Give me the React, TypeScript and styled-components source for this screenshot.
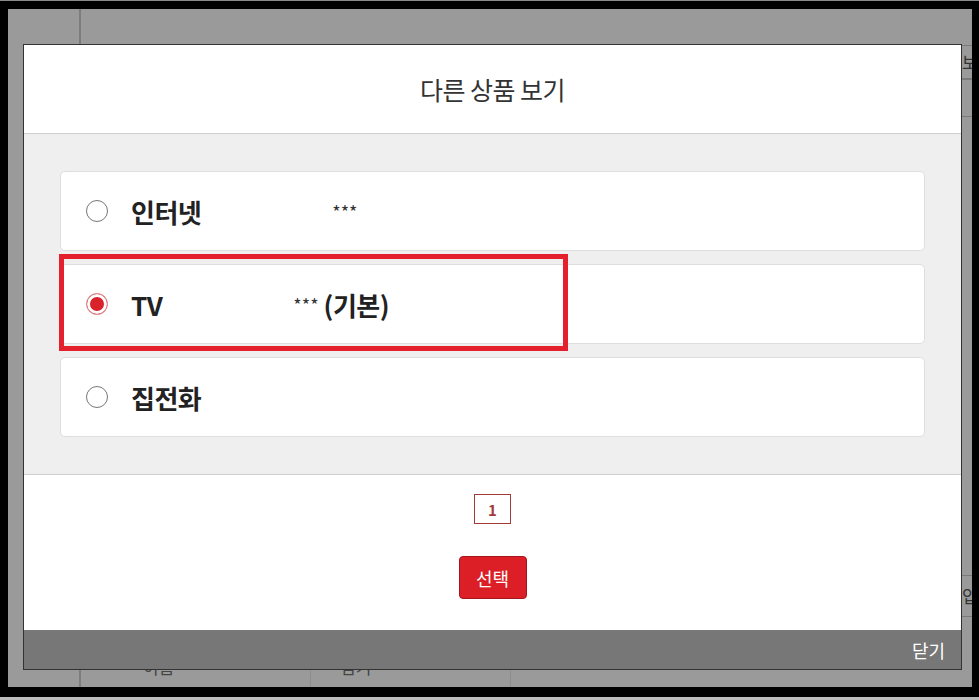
import React, { useState } from 'react'
import styled, { createGlobalStyle } from 'styled-components'

const GlobalStyle = createGlobalStyle`
  html, body {
    margin: 0;
    padding: 0;
    background: #000;
  }
  body {
    font-family: "Noto Sans CJK KR", "Noto Sans", sans-serif;
  }
`

type Product = {
  id: string
  name: string
  detail?: string
  note?: string
}

const products: Product[] = [
  { id: 'internet', name: '인터넷', detail: '***' },
  { id: 'tv', name: 'TV', detail: '***', note: '(기본)' },
  { id: 'phone', name: '집전화' },
]

const App: React.FC = () => {
  const [selected, setSelected] = useState('tv')

  return (
    <>
      <GlobalStyle />
      <Screen>
        <Page>
          <PageTop>
            <SideCell />
            <TopCell />
          </PageTop>
          <PageMiddle>
            <SideCell />
            <MiddleCell>
              <EdgeRow $top={0} $height={34}>
                <EdgeLabel>보</EdgeLabel>
              </EdgeRow>
              <EdgeRow $top={34} $height={38} />
              <EdgeRow $top={530} $height={42}>
                <EdgeLabel>입</EdgeLabel>
              </EdgeRow>
            </MiddleCell>
          </PageMiddle>
          <PageBottom>
            <SideCell />
            <BottomCell $width={230} $pad={62}>이름</BottomCell>
            <BottomCell $width={200} $pad={29}>검기</BottomCell>
          </PageBottom>

          <Modal>
            <ModalHeader>다른 상품 보기</ModalHeader>

            <ModalBody>
              {products.map(p => (
                <OptionCard key={p.id} onClick={() => setSelected(p.id)}>
                  <Radio $checked={selected === p.id} />
                  <OptionName>{p.name}</OptionName>
                  {p.detail && (
                    <OptionDetail>
                      {p.detail}
                      {p.note && <OptionNote>{p.note}</OptionNote>}
                    </OptionDetail>
                  )}
                  {p.id === 'tv' && <Highlight />}
                </OptionCard>
              ))}
            </ModalBody>

            <ModalFooter>
              <Pager>
                <PageNum>1</PageNum>
              </Pager>
              <SelectButton>선택</SelectButton>
            </ModalFooter>

            <CloseBar>
              <CloseText>닫기</CloseText>
            </CloseBar>
          </Modal>
        </Page>
      </Screen>
    </>
  )
}

const Screen = styled.div`
  width: 979px;
  height: 700px;
  box-sizing: border-box;
  background: #000;
  padding: 8px 7px 10px 8px;
  border-top: 1px solid #8a8a8a;
  border-bottom: 3px solid #bdbdbd;
`

const Page = styled.div`
  position: relative;
  width: 100%;
  height: 100%;
  background: #9a9a9a;
  display: flex;
  flex-direction: column;
  overflow: hidden;
`

const PageTop = styled.div`
  display: flex;
  height: 36px;
`

const PageMiddle = styled.div`
  display: flex;
  flex: 1;
`

const PageBottom = styled.div`
  display: flex;
  height: 30px;
`

const SideCell = styled.div`
  width: 71px;
  border-right: 2px solid #7c7c7c;
`

const TopCell = styled.div`
  flex: 1;
`

const MiddleCell = styled.div`
  position: relative;
  flex: 1;
`

const EdgeRow = styled.div<{ $top: number; $height: number }>`
  position: absolute;
  right: 0;
  top: ${props => props.$top}px;
  width: 84px;
  height: ${props => props.$height}px;
  box-sizing: border-box;
  border-top: 1px solid #7a7a7a;
  border-bottom: 1px solid #7a7a7a;
  display: flex;
  justify-content: flex-end;
  align-items: center;
`

const EdgeLabel = styled.span`
  width: 10px;
  overflow: hidden;
  white-space: nowrap;
  font-size: 17px;
  line-height: 20px;
  color: #333;
`

const BottomCell = styled.div<{ $width: number; $pad: number }>`
  width: ${props => props.$width}px;
  padding-left: ${props => props.$pad}px;
  font-size: 17px;
  color: #444;
  line-height: 20px;
  border-right: 1px solid #8c8c8c;
  box-sizing: border-box;
`

const Modal = styled.div`
  position: absolute;
  left: 15px;
  top: 35px;
  width: 939px;
  height: 626px;
  box-sizing: border-box;
  border: 1px solid #333;
  background: #fff;
  display: flex;
  flex-direction: column;
`

const ModalHeader = styled.div`
  height: 88px;
  display: flex;
  align-items: center;
  justify-content: center;
  font-size: 25px;
  color: #333;
  letter-spacing: -0.5px;
  border-bottom: 1px solid #cfcfcf;
`

const ModalBody = styled.div`
  background: #efefef;
  padding: 37px 36px 37px 36px;
  display: flex;
  flex-direction: column;
  gap: 13px;
  border-bottom: 1px solid #cfcfcf;
`

const OptionCard = styled.div`
  position: relative;
  height: 80px;
  box-sizing: border-box;
  background: #fff;
  border: 1px solid #dedede;
  border-radius: 5px;
  display: flex;
  align-items: center;
  padding-left: 25px;
  cursor: pointer;
`

const Radio = styled.span<{ $checked: boolean }>`
  width: 22px;
  height: 22px;
  box-sizing: border-box;
  border-radius: 50%;
  flex-shrink: 0;
  border: 1.5px solid ${props => (props.$checked ? '#e08a8a' : '#777')};
  background: ${props => (props.$checked ? '#d9232a' : '#fff')};
  box-shadow: ${props => (props.$checked ? 'inset 0 0 0 3px #fff' : 'none')};
`

const OptionName = styled.span`
  margin-left: 23px;
  font-size: 26px;
  font-weight: 700;
  color: #222;
  letter-spacing: -0.5px;
`

const OptionDetail = styled.span`
  margin-left: 131px;
  font-size: 18px;
  color: #333;
  display: flex;
  align-items: center;
`

const OptionNote = styled.span`
  margin-left: 5px;
  font-size: 26px;
  font-weight: 700;
  color: #222;
  letter-spacing: -0.5px;
`

const Highlight = styled.span`
  position: absolute;
  left: -2px;
  top: -11px;
  width: 509px;
  height: 97px;
  box-sizing: border-box;
  border: 5px solid #e3202b;
  pointer-events: none;
`

const ModalFooter = styled.div`
  flex: 1;
  display: flex;
  flex-direction: column;
  align-items: center;
  padding-top: 19px;
`

const Pager = styled.div`
  display: flex;
  gap: 4px;
`

const PageNum = styled.span`
  width: 37px;
  height: 30px;
  box-sizing: border-box;
  border: 1px solid #a33a3a;
  color: #a33a3a;
  font-size: 15px;
  font-weight: 700;
  display: flex;
  align-items: center;
  justify-content: center;
`

const SelectButton = styled.button`
  margin-top: 32px;
  width: 68px;
  height: 43px;
  border: 1px solid #a3161b;
  border-radius: 4px;
  background: #dc1f26;
  color: #fff;
  font-family: inherit;
  font-size: 18px;
  cursor: pointer;
`

const CloseBar = styled.div`
  height: 39px;
  background: #777;
  display: flex;
  align-items: center;
  justify-content: flex-end;
  padding-right: 16px;
`

const CloseText = styled.span`
  font-size: 18px;
  color: #fff;
  cursor: pointer;
`

export default App
